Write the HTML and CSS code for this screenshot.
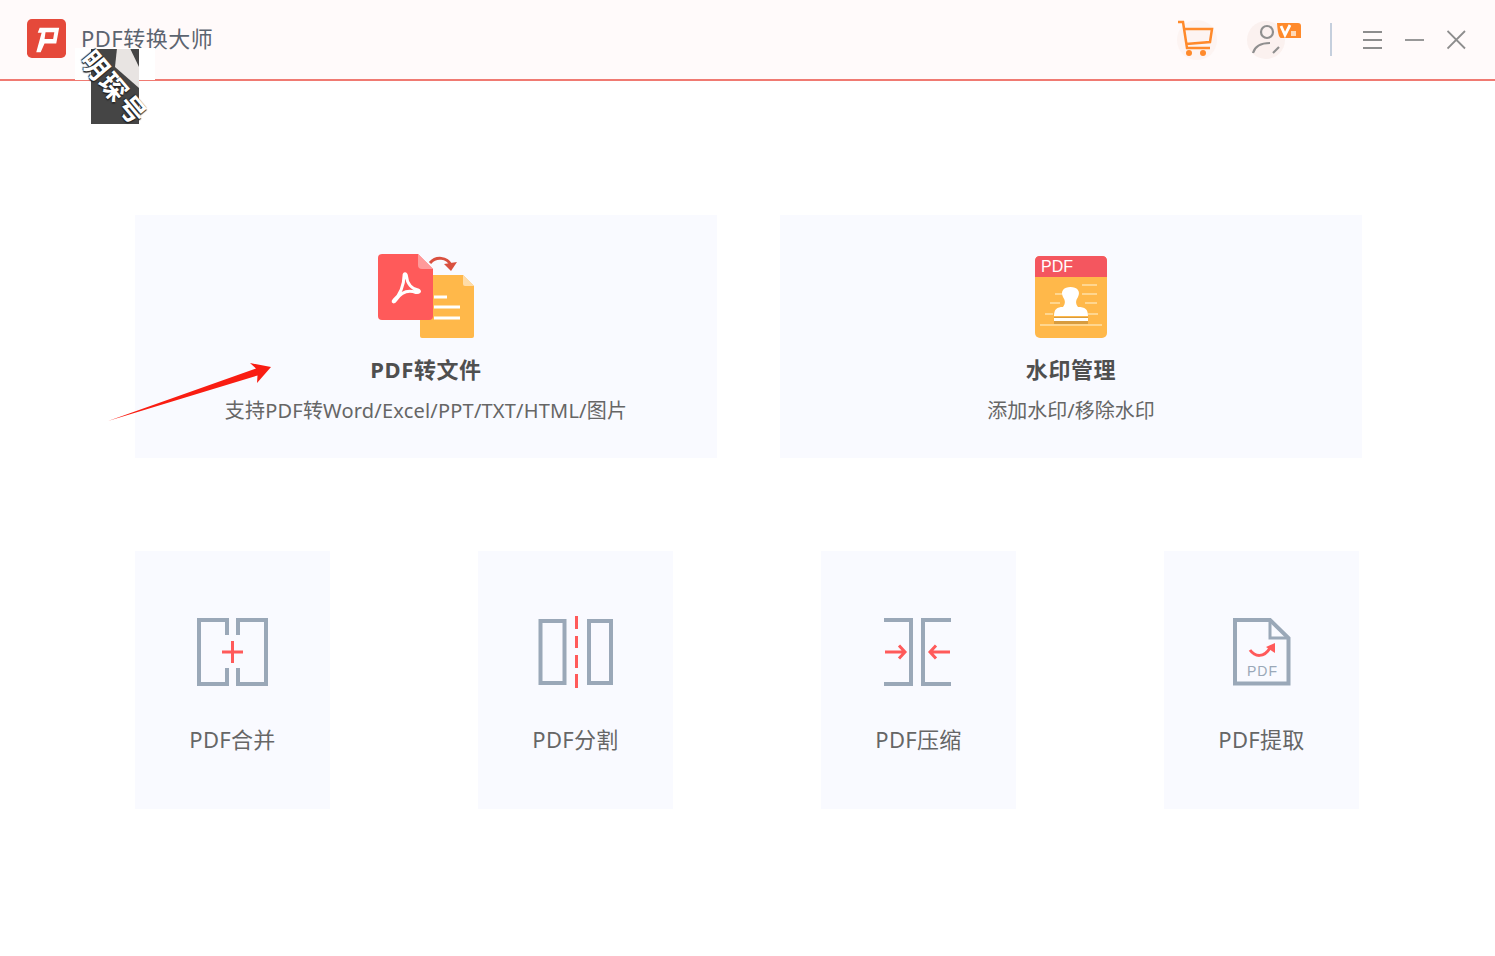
FILE: index.html
```html
<!DOCTYPE html>
<html lang="zh-CN">

<head>
    <meta charset="UTF-8">
    <title>PDF转换大师</title>
    <link rel="stylesheet" href="styles.css">
</head>

<body>
    <header class="titlebar">
        <div class="brand">
            <svg class="logo" width="39" height="39" viewBox="0 0 40 40">
                <rect width="40" height="40" rx="5" fill="#e5493a"/>
                <path d="M13 9H33L30 25H18L14 34H9.500L15 14H11Z" fill="#fff"/>
                <path d="M19 13.500H28L26.800 20.500H18Z" fill="#e5493a"/>
            </svg>
            <span class="app-name">PDF转换大师</span>
        </div>
        <div class="tools">
            <svg class="tool-cart" width="40" height="40" viewBox="0 0 40 40">
                <circle cx="20" cy="20" r="20" fill="#fdf4f2"/>
                <path d="M1 2H6L10 28H33M7.500 9H35L33 22L9 24" fill="none" stroke="#ff8a2b" stroke-width="2.500"/>
                <circle cx="12" cy="33" r="3" fill="#ff8a2b"/>
                <circle cx="26" cy="33" r="3" fill="#ff8a2b"/>
            </svg>
            <svg class="tool-user" width="54" height="40" viewBox="0 0 54 40">
                <circle cx="19" cy="20" r="19" fill="#fbf1ef"/>
                <circle cx="20" cy="12" r="6" fill="none" stroke="#8f8f8f" stroke-width="2.200"/>
                <path d="M6 33C8 26 14 23 23 23" fill="none" stroke="#8f8f8f" stroke-width="2.200"/>
                <path d="M26 33L32 27" fill="none" stroke="#8f8f8f" stroke-width="2.200"/>
                <path d="M30 3H51Q54 3 54 6V18H34Q31 18 30 3Z" fill="#ff8a2b"/>
                <path d="M34 6L38 15L43 5" fill="none" stroke="#fff" stroke-width="2.800"/>
                <rect x="44" y="11" width="5" height="5" fill="#ffd9b8"/>
            </svg>
            <span class="divider"></span>
            <svg width="20" height="20" viewBox="0 0 20 20" class="win-btn">
                <path d="M0 2H19M0 10H19M0 18H19" stroke="#8d8d8d" stroke-width="1.800"/>
            </svg>
            <svg width="20" height="20" viewBox="0 0 20 20" class="win-btn">
                <path d="M0 10H19" stroke="#8d8d8d" stroke-width="1.800"/>
            </svg>
            <svg width="20" height="20" viewBox="0 0 20 20" class="win-btn">
                <path d="M0.500 1L18 18.500M18 1L0.500 18.500" stroke="#8d8d8d" stroke-width="1.800"/>
            </svg>
        </div>
    </header>

    <div class="watermark">
        <div class="watermark-dark">
            <span class="watermark-fold"></span>
            <span class="watermark-text">明琛号</span>
        </div>
    </div>

    <svg class="red-arrow" width="170" height="64" viewBox="0 0 170 64">
        <path d="M0 59L148 6.500L142 1L163 5L149 21L149.500 13.500Z" fill="#f91d12"/>
    </svg>

    <main class="content">
        <section class="row-large">
            <div class="card-large">
                <svg width="96" height="84" viewBox="0 0 96 84" class="icon-large">
                    <path d="M44 21H85L96 32V82Q96 84 94 84H44Q42 84 42 82V23Q42 21 44 21Z" fill="#ffb84a"/>
                    <path d="M85 21L96 32H87Q85 32 85 30Z" fill="#ffdca8"/>
                    <path d="M56 43H69M56 53H82M56 64H82" stroke="#fff" stroke-width="3"/>
                    <path d="M4 0H40L55 15V62Q55 66 51 66H4Q0 66 0 62V4Q0 0 4 0Z" fill="#ff5a5a"/>
                    <path d="M40 0L55 15H44Q40 15 40 11Z" fill="#ff9a9a"/>
                    <path d="M16 46C22 41 26 31 26 22C26 19 28 19 28.500 22C29 30 34 35 40 36C43 37 41 39 38 38.500C31 36 24 37 18 46C16 49 14 48 16 46Z" fill="none" stroke="#fff" stroke-width="3"/>
                    <path d="M52 9C58 2 69 3 73 11" fill="none" stroke="#d9503f" stroke-width="3"/>
                    <path d="M66 10L79 8L73 17Z" fill="#d9503f"/>
                </svg>
                <h2 class="card-title">PDF转文件</h2>
                <p class="card-desc card-desc-wide">支持PDF转Word/Excel/PPT/TXT/HTML/图片</p>
            </div>
            <div class="card-large">
                <svg width="72" height="82" viewBox="0 0 72 82" class="icon-large icon-stamp">
                    <rect width="72" height="82" rx="5" fill="#ffb84a"/>
                    <path d="M0 21V5Q0 0 5 0H67Q72 0 72 5V21Z" fill="#f4565f"/>
                    <text x="6" y="16" class="stamp-label">PDF</text>
                    <path d="M47 29H62M47 38H62M20 38H27M15 47H25M50 47H62M10 58H18M53 58H63M5 69H67" stroke="#ffd68f" stroke-width="2"/>
                    <path d="M28 51C31 47 30 44 28 41C25 35 29 31 35.500 31C42 31 46 35 43 41C41 44 40 47 43 51C50 51 53 53 53 60H19C19 53 22 51 28 51Z" fill="#fff"/>
                    <rect x="19" y="61" width="34" height="1" fill="#d89c3e"/>
                    <rect x="19" y="62" width="34" height="3" fill="#fff"/>
                    <rect x="19" y="65" width="34" height="3" fill="#d89c3e"/>
                </svg>
                <h2 class="card-title">水印管理</h2>
                <p class="card-desc">添加水印/移除水印</p>
            </div>
        </section>

        <section class="row-small">
            <div class="card-small">
                <svg width="72" height="72" viewBox="0 0 72 72" class="icon-small">
                    <path d="M30 19V4H2V68H30V52M41 19V4H69V68H41V52" fill="none" stroke="#9aa8b8" stroke-width="4"/>
                    <path d="M25 36H46M35.500 25V47" stroke="#ff5a5a" stroke-width="3"/>
                </svg>
                <span class="card-label">PDF合并</span>
            </div>
            <div class="card-small">
                <svg width="76" height="72" viewBox="0 0 76 72" class="icon-small">
                    <rect x="2.500" y="5" width="24" height="62" fill="none" stroke="#9aa8b8" stroke-width="4"/>
                    <rect x="51" y="5" width="22" height="62" fill="none" stroke="#9aa8b8" stroke-width="4"/>
                    <path d="M38.500 0V13M38.500 20V32M38.500 39V52M38.500 58V72" stroke="#ff5a5a" stroke-width="3"/>
                </svg>
                <span class="card-label">PDF分割</span>
            </div>
            <div class="card-small">
                <svg width="70" height="72" viewBox="0 0 70 72" class="icon-small">
                    <path d="M0 4H27V68H0M67 4H39V68H67" fill="none" stroke="#9aa8b8" stroke-width="4"/>
                    <path d="M1 36H20.500M15 29.500L21 36L15 42.500M66 36H46.500M52 29.500L46 36L52 42.500" fill="none" stroke="#ff5a5a" stroke-width="3"/>
                </svg>
                <span class="card-label">PDF压缩</span>
            </div>
            <div class="card-small">
                <svg width="58" height="72" viewBox="0 0 58 72" class="icon-small">
                    <path d="M2 4H37L55.500 22V67.500H2Z" fill="none" stroke="#9aa8b8" stroke-width="4"/>
                    <path d="M37 4V22H55.500" fill="none" stroke="#9aa8b8" stroke-width="3"/>
                    <path d="M17 34C22 41 31 42 37 32" fill="none" stroke="#ff5a5a" stroke-width="3"/>
                    <path d="M33 31L42 27L42 37Z" fill="#ff5a5a"/>
                    <text x="29.500" y="60" class="pdf-mark" text-anchor="middle">PDF</text>
                </svg>
                <span class="card-label">PDF提取</span>
            </div>
        </section>
    </main>
</body>

</html>
```

FILE: styles.css
```css
html, body {
    margin: 0;
    padding: 0;
}

body {
    height: 956px;
    overflow: hidden;
    background-color: #fff;
    font-family: "Noto Sans", "Noto Sans CJK SC", sans-serif;
    color: #555;
}

.titlebar {
    height: 79px;
    padding: 0 28px 0 27px;
    display: flex;
    align-items: center;
    justify-content: space-between;
    background-color: #fffafa;
    border-bottom: 2px solid #f07a72;
}

.brand {
    display: flex;
    align-items: center;
    gap: 15px;
}

.logo {
    margin-bottom: 2px;
}

.app-name {
    margin-bottom: 5px;
    font-size: 22px;
    color: #5c6470;
    letter-spacing: 0.5px;
}

.tools {
    display: flex;
    align-items: center;
}

.tool-cart {
    margin-right: 30px;
}

.tool-user {
    margin-right: 29px;
}

.divider {
    width: 2px;
    height: 33px;
    background-color: #c5cfdd;
    margin-right: 31px;
}

.win-btn {
    margin-left: 22px;
}

.divider + .win-btn {
    margin-left: 0;
}

.watermark {
    position: absolute;
    left: 75px;
    top: 48px;
    width: 80px;
    height: 32px;
    background-color: #fff;
}

.watermark-dark {
    position: absolute;
    left: 16px;
    top: 1px;
    width: 48px;
    height: 75px;
    background-color: #454545;
}

.watermark-fold {
    position: absolute;
    left: 0;
    top: 0;
    width: 48px;
    height: 42px;
    background-color: #e8e4e2;
    clip-path: polygon(54% 0, 82% 0, 100% 43%, 100% 93%, 50% 43%);
}

.watermark-text {
    position: absolute;
    left: -27px;
    top: 25px;
    width: 100px;
    text-align: center;
    font-size: 27px;
    font-weight: 700;
    line-height: 28px;
    letter-spacing: 2px;
    color: #fff;
    white-space: nowrap;
    transform: rotate(50deg);
    text-shadow: 1px 1px 1px #222, -1px 0 1px #222;
}

.red-arrow {
    position: absolute;
    left: 108px;
    top: 362px;
}

.content {
    padding: 134px 0 0 135px;
}

.row-large {
    display: flex;
    gap: 63px;
}

.card-large {
    width: 582px;
    height: 243px;
    display: flex;
    flex-direction: column;
    align-items: center;
    background-color: #f9faff;
}

.icon-large {
    margin-top: 39px;
}

.icon-stamp {
    margin-top: 41px;
}

.card-title {
    margin: 15px 0 0;
    font-size: 22px;
    line-height: 32px;
    font-weight: 700;
    letter-spacing: 0.6px;
    color: #4f4f4f;
}

.card-desc {
    margin: 10px 0 0;
    font-size: 20px;
    line-height: 32px;
    color: #666;
}

.card-desc-wide {
    letter-spacing: 0.2px;
}

.row-small {
    margin-top: 93px;
    display: flex;
    gap: 148px;
}

.card-small {
    width: 195px;
    height: 258px;
    display: flex;
    flex-direction: column;
    align-items: center;
    background-color: #f9faff;
}

.icon-small {
    margin-top: 65px;
}

.card-label {
    margin-top: 35px;
    font-size: 22px;
    line-height: 32px;
    letter-spacing: 0.3px;
    color: #666;
}

.stamp-label {
    font-family: "Liberation Sans", sans-serif;
    font-size: 16px;
    fill: #fff;
}

.pdf-mark {
    font-family: "Liberation Sans", sans-serif;
    font-size: 14px;
    letter-spacing: 1px;
    fill: #9aa8b8;
}
```
